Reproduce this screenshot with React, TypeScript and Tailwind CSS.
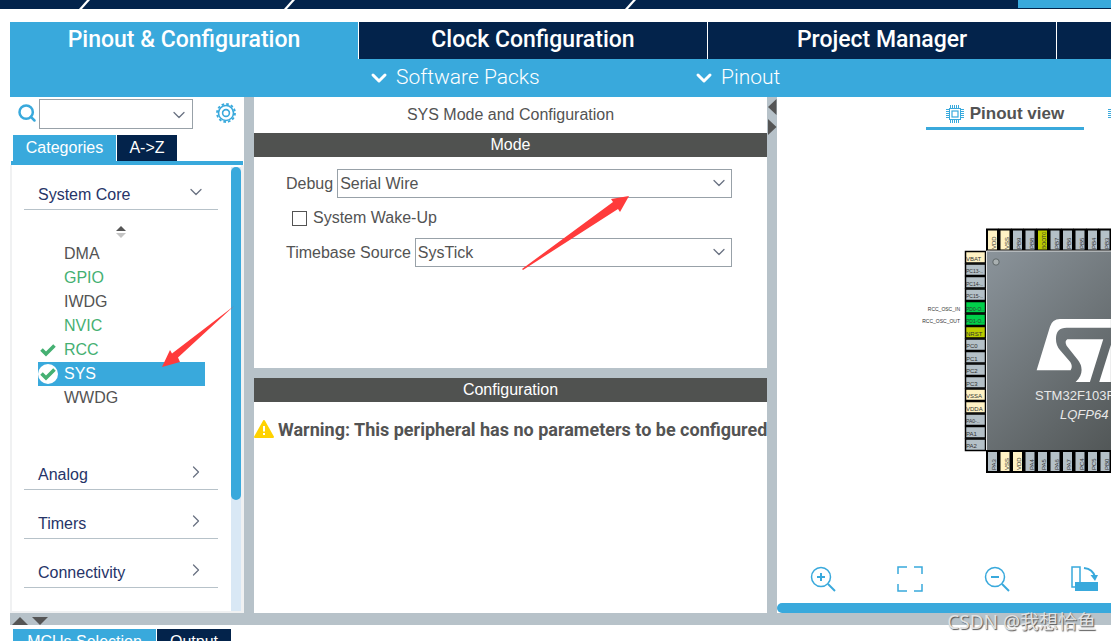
import type { ReactNode } from "react"
import { ChevronDown, ChevronRight, Search } from "lucide-react"
import clsx from "clsx"

const tabs = ["Pinout & Configuration", "Clock Configuration", "Project Manager", ""]

const peripherals = [
    { name: "DMA", active: false, done: false },
    { name: "GPIO", active: true, done: false },
    { name: "IWDG", active: false, done: false },
    { name: "NVIC", active: true, done: false },
    { name: "RCC", active: true, done: true },
    { name: "SYS", active: true, done: true },
    { name: "WWDG", active: false, done: false },
]

const PLAIN = "#b4c0c7"
const POWER = "#fff2c4"
const RESET = "#bbcc00"
const USED = "#00d04a"

const leftPins = [
    ["VBAT", POWER], ["PC13-..", PLAIN], ["PC14-..", PLAIN], ["PC15-..", PLAIN],
    ["PD0-O..", USED], ["PD1-O..", USED], ["NRST", RESET], ["PC0", PLAIN],
    ["PC1", PLAIN], ["PC2", PLAIN], ["PC3", PLAIN], ["VSSA", POWER],
    ["VDDA", POWER], ["PA0-..", PLAIN], ["PA1", PLAIN], ["PA2", PLAIN],
]

const topPins = [
    ["VDD", POWER], ["VSS", POWER], ["PB9", PLAIN], ["PB8", PLAIN], ["BOOT0", RESET],
    ["PB7", PLAIN], ["PB6", PLAIN], ["PB5", PLAIN], ["PB4", PLAIN], ["PB3", PLAIN],
]

const bottomPins = [
    ["PA3", PLAIN], ["VSS", POWER], ["VDD", POWER], ["PA4", PLAIN], ["PA5", PLAIN],
    ["PA6", PLAIN], ["PA7", PLAIN], ["PC4", PLAIN], ["PC5", PLAIN], ["PB0", PLAIN],
]

// long pin names get the smaller size so they stay inside the pin
const pinFont = (name: string) => (name.length > 4 ? 5 : 6)

const Slash = () => (
    <svg width="11" height="9" viewBox="0 0 11 9" className="shrink-0">
        <path d="M0 9 L8 0 H11 L3 9 Z" fill="#fff" />
    </svg>
)

const Check = () => (
    <svg width="16" height="14" viewBox="0 0 16 14">
        <path d="M1.500 6.500 L6 11 L14.500 2.500" fill="none" stroke="#45b072" strokeWidth="3.600" />
    </svg>
)

const Gear = () => (
    <svg width="22" height="22" viewBox="-11 -11 22 22" fill="none" stroke="#39a9dc">
        <circle r="7.500" strokeWidth="1.600" />
        <circle r="9" strokeWidth="1.800" strokeDasharray="2.600 2.110" />
        <circle r="3.400" strokeWidth="1.600" />
    </svg>
)

const ChipIcon = () => (
    <svg width="18" height="18" viewBox="0 0 18 18" fill="none" stroke="#39a9dc" className="shrink-0">
        <rect x="3.500" y="3.500" width="11" height="11" />
        <rect x="6" y="6" width="6" height="6" strokeWidth="1.200" />
        <path
            d="M4.500 0V3M6.500 0V3M8.500 0V3M10.500 0V3M12.500 0V3M4.500 15V18M6.500 15V18M8.500 15V18M10.500 15V18M12.500 15V18M0 4.500H3M0 6.500H3M0 8.500H3M0 10.500H3M0 12.500H3M15 4.500H18M15 6.500H18M15 8.500H18M15 10.500H18M15 12.500H18"
        />
    </svg>
)

const ToolButton = ({ label, children }: { label: string; children: ReactNode }) => (
    <button type="button" aria-label={label} className="h-7 w-7 shrink-0">
        <svg width="28" height="28" viewBox="0 0 28 28" fill="none" stroke="#39a9dc" strokeWidth="1.500">
            {children}
        </svg>
    </button>
)

const SelectBox = ({ id, value }: { id: string; value: string }) => (
    <div className="relative flex-1">
        <select id={id} className="block h-[29px] w-full appearance-none border border-[#98a1a8] bg-white pl-[2px] text-[#535353]">
            <option>{value}</option>
        </select>
        <ChevronDown size={20} strokeWidth={1.500} className="pointer-events-none absolute right-[3px] top-1 text-gray-500" />
    </div>
)

const Category = ({ name, open }: { name: string; open?: boolean }) => (
    <button
        type="button"
        className={clsx(
            "flex w-full items-end justify-between border-b border-[#b7c2c9] pl-[14px] pr-3 pb-[2px] text-[#263468]",
            open ? "h-[45px]" : "h-[49px]"
        )}
    >
        <span>{name}</span>
        {open ? (
            <ChevronDown size={20} strokeWidth={1.500} className="mb-[5px] text-gray-500" />
        ) : (
            <ChevronRight size={20} strokeWidth={1.500} className="mb-[5px] text-gray-500" />
        )}
    </button>
)

const ChipView = () => (
    <svg width="191" height="246" viewBox="920 228 191 246" className="shrink-0 font-['Liberation_Sans']">
        <defs>
            <linearGradient id="body" x1="0" y1="0" x2="1" y2="1">
                <stop offset="0" stopColor="#8b949b" />
                <stop offset="1" stopColor="#454948" />
            </linearGradient>
        </defs>
        <g fill="#333">
            {leftPins.map(([name, fill], i) => (
                <g key={name} fontSize={pinFont(name)}>
                    <rect x="965.500" y={251.500 + i * 12.500} width="20" height="11.500" fill={fill} stroke="#000" strokeWidth="1.500" />
                    <text x="966" y={260.500 + i * 12.500}>{name}</text>
                </g>
            ))}
            {topPins.map(([name, fill], i) => (
                <g key={name} fontSize={pinFont(name)}>
                    <rect x={987 + i * 12.500} y="229.500" width="11" height="21" fill={fill} stroke="#000" strokeWidth="2" />
                    <text transform={`translate(${996 + i * 12.500} 249) rotate(-90)`}>{name}</text>
                </g>
            ))}
            {bottomPins.map(([name, fill], i) => (
                <g key={name} fontSize={pinFont(name)}>
                    <rect x={987 + i * 12.500} y="451" width="11" height="21" fill={fill} stroke="#000" strokeWidth="2" />
                    <text transform={`translate(${996 + i * 12.500} 470) rotate(-90)`}>{name}</text>
                </g>
            ))}
        </g>
        <g fontSize="5" fill="#333" textAnchor="end">
            <text x="960" y="311">RCC_OSC_IN</text>
            <text x="960" y="323">RCC_OSC_OUT</text>
        </g>
        <rect x="986" y="251" width="200" height="199" fill="url(#body)" />
        <path d="M986.500 450 V251 H1111" fill="none" stroke="#e2e4e4" />
        <path d="M985 450.500 H1111" stroke="#000" />
        <circle cx="996" cy="262" r="3.200" fill="#a9b0b1" stroke="#5f6769" />
        <g fill="#fff" transform="translate(1010 310) scale(.333)">
            <path d="M80 181 L120 50 Q127 27 150 27 H303 V53 H170 Q138 53 138 86 Q138 106 150 120 L181 156 Q190 170 182 181 Z" />
            <path d="M172 88 H280 L240 216 H197 Q215 200 215 180 Q215 164 204 150 L170 107 Q163 94 172 88 Z" />
            <path d="M303 104 L268 216 H303 Z" />
        </g>
        <text x="1035" y="400" fontSize="13" fill="#e8e8e8">STM32F103R</text>
        <text x="1060" y="419" fontSize="13" fontStyle="italic" fill="#e8e8e8">LQFP64</text>
    </svg>
)

const App = () => {
    return (
        <div className="relative flex h-screen flex-col overflow-hidden bg-white font-['Liberation_Sans',Arial,sans-serif] text-base text-[#535353]">
            <div className="flex h-[9px] shrink-0 bg-[#03234b]">
                <div className="w-[79px]" />
                <Slash />
                <div className="w-[194px]" />
                <Slash />
                <div className="w-[330px]" />
                <Slash />
                <div className="flex-1" />
                <div className="h-2 w-[93px] bg-[#39a9dc]" />
            </div>

            <div className="ml-[10px] mt-[13px] flex min-h-0 flex-1 flex-col">
                <nav className="grid h-[37px] shrink-0 grid-cols-[349fr_349fr_349fr_54fr] font-['Roboto'] text-[23px] font-medium text-white">
                    {tabs.map((tab, i) => (
                        <button
                            key={i}
                            type="button"
                            aria-label={tab || "Tools"}
                            className={clsx(
                                "border-r border-white last:border-r-0",
                                i === 0 ? "bg-[#39a9dc]" : "bg-[#03234b]"
                            )}
                        >
                            {tab}
                        </button>
                    ))}
                </nav>
                <div className="flex h-[38px] shrink-0 items-center bg-[#39a9dc] pl-[357px] font-['Roboto'] text-[21px] font-light text-white">
                    <button type="button" className="flex w-[325px] items-center gap-[5px]">
                        <ChevronDown size={24} strokeWidth={3} />
                        Software Packs
                    </button>
                    <button type="button" className="flex items-center gap-[5px]">
                        <ChevronDown size={24} strokeWidth={3} />
                        Pinout
                    </button>
                </div>

                <main className="flex min-h-0 flex-1">
                    <aside className="flex w-[234px] shrink-0 flex-col">
                        <div className="flex h-[38px] shrink-0 items-start pl-[7px] pt-[2px]">
                            <Search size={20} strokeWidth={3} className="mt-1 shrink-0 text-[#39a9dc]" />
                            <div className="relative ml-[2px] w-[154px]">
                                <select aria-label="Search" className="block h-[30px] w-full appearance-none border border-[#98a1a8] bg-white" />
                                <ChevronDown size={20} strokeWidth={1.500} className="pointer-events-none absolute right-1 top-[6px] text-gray-500" />
                            </div>
                            <button type="button" aria-label="Settings" className="ml-[22px] mt-[3px]">
                                <Gear />
                            </button>
                        </div>
                        <div className="flex h-[26px] shrink-0 gap-px pl-[3px] text-white">
                            <button type="button" className="w-[103px] bg-[#39a9dc]">Categories</button>
                            <button type="button" className="w-[60px] bg-[#03234b]">A-&gt;Z</button>
                        </div>
                        <div className="mx-px h-1 shrink-0 bg-[#39a9dc]" />
                        <div className="flex min-h-0 flex-1 border-2 border-r-[3px] border-t-0 border-[#f0f1f2]">
                            <div className="min-w-0 flex-1 overflow-hidden pl-3 pr-[13px]">
                                <Category name="System Core" open />
                                <div className="flex h-8 items-center justify-center">
                                    <svg width="12" height="14" viewBox="0 0 12 14" className="mt-3">
                                        <path d="M1 6 L6 1 L11 6 Z" fill="#555" />
                                        <path d="M1 8 L6 13 L11 8 Z" fill="#c4c4c4" />
                                    </svg>
                                </div>
                                <ul className="pl-[14px] pr-[13px]">
                                    {peripherals.map((p) => (
                                        <li key={p.name}>
                                            <button
                                                type="button"
                                                className={clsx(
                                                    "flex h-6 w-full items-center",
                                                    p.name === "SYS" ? "bg-[#39a9dc] text-white" : p.active ? "text-[#45b072]" : "text-[#535353]"
                                                )}
                                            >
                                                <span className="flex w-[26px] items-center">
                                                    {p.done && (
                                                        <span className={clsx("flex h-5 w-5 items-center justify-center rounded-full", p.name === "SYS" && "bg-white")}>
                                                            <Check />
                                                        </span>
                                                    )}
                                                </span>
                                                {p.name}
                                            </button>
                                        </li>
                                    ))}
                                </ul>
                                <div className="mt-[31px]">
                                    <Category name="Analog" />
                                    <Category name="Timers" />
                                    <Category name="Connectivity" />
                                </div>
                            </div>
                            <div className="mt-[2px] w-[10px] bg-[#d9e8f5]">
                                <div className="h-3/4 w-full rounded-full bg-[#39a9dc]" />
                            </div>
                        </div>
                    </aside>

                    <div className="w-[10px] shrink-0 bg-[#b7c2c9]" />

                    <section className="flex w-[513px] shrink-0 flex-col">
                        <h1 className="flex h-9 shrink-0 items-center justify-center">SYS Mode and Configuration</h1>
                        <h2 className="flex h-6 shrink-0 items-center justify-center bg-[#505250] text-white">Mode</h2>
                        <div className="flex h-[211px] shrink-0 flex-col pl-8 pr-[35px] pt-3">
                            <div className="flex items-center gap-1">
                                <label htmlFor="debug">Debug</label>
                                <SelectBox id="debug" value="Serial Wire" />
                            </div>
                            <label className="flex h-10 items-center gap-[6px] pl-[6px]">
                                <input type="checkbox" className="h-[15px] w-[15px] appearance-none border border-[#535353]" />
                                System Wake-Up
                            </label>
                            <div className="flex items-center gap-1">
                                <label htmlFor="timebase">Timebase Source</label>
                                <SelectBox id="timebase" value="SysTick" />
                            </div>
                        </div>
                        <div className="h-[10px] shrink-0 bg-[#b7c2c9]" />
                        <h2 className="flex h-6 shrink-0 items-center justify-center bg-[#505250] text-white">Configuration</h2>
                        <p className="flex h-[54px] items-center gap-1 whitespace-nowrap font-['Roboto'] text-[18px] font-bold">
                            <svg width="20" height="18" viewBox="0 0 20 18" className="shrink-0">
                                <path d="M10 1 L19 17 H1 Z" fill="#ffd200" stroke="#ffd200" strokeWidth="2" strokeLinejoin="round" />
                                <path d="M10 6 V11.500 M10 13 V15" stroke="#fff" strokeWidth="2" />
                            </svg>
                            Warning: This peripheral has no parameters to be configured
                        </p>
                    </section>

                    <div className="w-[10px] shrink-0 bg-[#b7c2c9]">
                        <svg width="10" height="40" viewBox="0 0 10 40">
                            <path d="M9.500 2 V18 L1 10 Z" fill="#555" />
                            <path d="M1 22 V38 L9.500 30 Z" fill="#555" />
                        </svg>
                    </div>

                    <section className="flex min-w-0 flex-1 flex-col overflow-hidden">
                        <div className="flex shrink-0 pl-[149px]">
                            <button type="button" className="flex h-[33px] w-[158px] shrink-0 items-center justify-center gap-[6px] border-b-[3px] border-[#39a9dc] pt-1 text-[17px] font-bold">
                                <ChipIcon />
                                Pinout view
                            </button>
                            <button type="button" aria-label="System view" className="ml-6 shrink-0">
                                <ChipIcon />
                            </button>
                        </div>
                        <div className="flex flex-1 items-center overflow-hidden pl-[143px] pt-[6px]">
                            <ChipView />
                        </div>
                        <div className="flex h-[34px] shrink-0 items-start gap-[59px] pl-8">
                            <ToolButton label="Zoom in">
                                <circle cx="12" cy="12" r="9.500" />
                                <path d="M19 19 L26 26" strokeWidth="2" />
                                <path d="M8 12 H16 M12 8 V16" strokeWidth="2" />
                            </ToolButton>
                            <ToolButton label="Best fit">
                                <path d="M2 9 V2 H11 M18 2 H26 V9 M26 19 V26 H18 M11 26 H2 V19" />
                            </ToolButton>
                            <ToolButton label="Zoom out">
                                <circle cx="12" cy="12" r="9.500" />
                                <path d="M19 19 L26 26" strokeWidth="2" />
                                <path d="M8 12 H16" strokeWidth="2" />
                            </ToolButton>
                            <ToolButton label="Rotate clockwise">
                                <path d="M2 2 H10 V22 H2 Z" />
                                <path d="M5 17 H28 V26 H5 Z" fill="#39a9dc" stroke="none" />
                                <path d="M14 3 Q23 4 25 12" strokeWidth="2" />
                                <path d="M20.500 10 H28 L25 16 Z" fill="#39a9dc" stroke="none" />
                            </ToolButton>
                        </div>
                        <div className="mt-1 h-[10px] shrink-0 rounded-l-full bg-[#39a9dc]" />
                    </section>
                </main>

                <div className="h-3 shrink-0 bg-[#b7c2c9] pl-[2px]">
                    <svg width="40" height="12" viewBox="0 0 40 12">
                        <path d="M0 12 L8 4 L16 12 Z" fill="#555" />
                        <path d="M20 4 H36 L28 12 Z" fill="#555" />
                    </svg>
                </div>
                <div className="flex h-4 shrink-0 items-start gap-px overflow-hidden pl-[3px] pt-1 text-white">
                    <button type="button" className="h-[26px] w-[143px] shrink-0 bg-[#39a9dc]">MCUs Selection</button>
                    <button type="button" className="h-[26px] w-[74px] shrink-0 bg-[#03234b]">Output</button>
                </div>
            </div>

            {/* pointers to the selected peripheral and the debug mode */}
            <svg width="72" height="62" viewBox="162 306 72 62" className="pointer-events-none absolute left-[162px] top-[306px]">
                <path d="M234 306 L172 353.500 L170 350 L162 367 L180 362 L178 357.500 Z" fill="#ff3b3b" />
            </svg>
            <svg width="108" height="76" viewBox="522 195 108 76" className="pointer-events-none absolute left-[522px] top-[195px]">
                <path d="M522 269 L613 202 L611 199 L629 196 L620 212 L618 209 L523 270 Z" fill="#ff3b3b" />
            </svg>

            <div className="absolute bottom-[5px] right-[15px] font-['Noto_Sans','Noto_Sans_CJK_SC',sans-serif] text-[19px] leading-7 text-[#e2e2e2] [text-shadow:1px_1px_1px_#555]">
                CSDN @我想恰鱼
            </div>
        </div>
    )
}

export default App
